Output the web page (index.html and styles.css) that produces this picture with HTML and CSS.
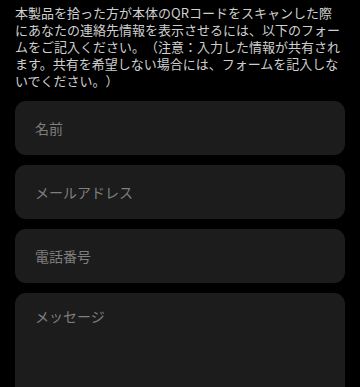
FILE: index.html
```html
<!DOCTYPE html>
<html lang="ja">
<head>
<meta charset="utf-8">
<link rel="stylesheet" href="styles.css">
</head>
<body>
<div class="page">
  <p class="intro">本製品を拾った方が本体のQRコードをスキャンした際にあなたの連絡先情報を表示させるには、以下のフォームをご記入ください。（注意：入力した情報が共有されます。共有を希望しない場合には、フォームを記入しないでください。）</p>
  <form class="form">
    <input class="field" type="text" placeholder="名前">
    <input class="field" type="email" placeholder="メールアドレス">
    <input class="field" type="tel" placeholder="電話番号">
    <textarea class="field area" placeholder="メッセージ"></textarea>
  </form>
</div>
</body>
</html>
```

FILE: styles.css
```css
html, body {
  margin: 0;
  padding: 0;
  background: #000;
}
.page {
  padding: 4px 15px 0;
  font-family: "Noto Sans CJK JP", "Noto Sans", sans-serif;
}
.intro {
  margin: 0;
  width: 327px;
  font-size: 13px;
  line-height: 17px;
  color: #cfcfcf;
  text-spacing-trim: space-all;
  line-break: strict;
}
.form {
  margin-top: 12px;
  display: flex;
  flex-direction: column;
  gap: 10px;
}
.field {
  box-sizing: border-box;
  width: 100%;
  height: 54px;
  border: none;
  outline: none;
  border-radius: 11px;
  background: #1c1c1c;
  color: #e0e0e0;
  font-family: "Noto Sans CJK JP", "Noto Sans", sans-serif;
  font-size: 14px;
  padding: 0 20px;
  margin: 0;
}
.field::placeholder {
  color: #7f7f7f;
  opacity: 1;
}
.area {
  height: 130px;
  padding: 13px 20px;
  line-height: 20px;
  resize: none;
  display: block;
}
```
